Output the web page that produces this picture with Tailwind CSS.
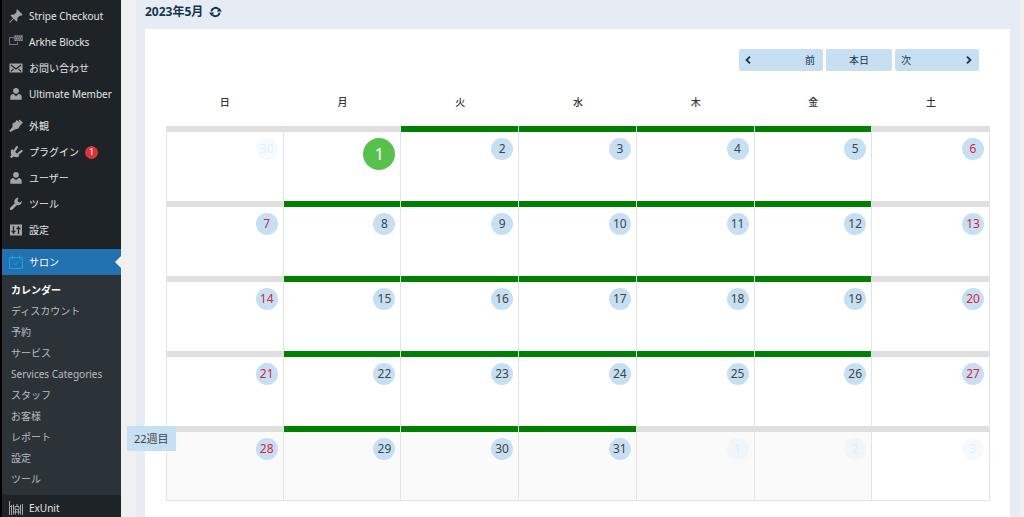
<!DOCTYPE html>
<html lang="ja">

<head>
  <meta charset="UTF-8">
  <meta name="viewport" content="width=device-width, initial-scale=1.0">
  <script src="https://cdn.jsdelivr.net/npm/@tailwindcss/browser@4"></script>
  <title>カレンダー</title>
</head>

<body class="bg-[#f0f0f1] font-['Noto_Sans','Noto_Sans_CJK_JP',sans-serif]">
  <div class="flex h-screen overflow-hidden">

    <nav class="w-[121px] shrink-0 border-l-2 border-black bg-[#1d2327] text-[10px] text-[#e4e5e6] whitespace-nowrap">
      <ul class="pt-[3px]">
        <li>
          <a href="#" class="flex items-center h-[26px] pl-[7px] gap-[6px]">
            <svg class="size-[14px] shrink-0 fill-[#a0a5aa]" viewBox="1 1.5 17.500 17.500"><path d="M10.400 3l1-1.100 6.700 6.700-1.100 1.100c-.8.2-1.600.1-2.200-.2l-3.400 3.400c.5 1.600.3 3.200-.9 4.400L7 13.800 2.600 18.300l-1.200.4.400-1.200L6.200 13 2.700 9.500c1.200-1.200 2.900-1.400 4.400-.9l3.500-3.400c-.4-.7-.4-1.500-.2-2.200z" /></svg>
            Stripe Checkout
          </a>
        </li>
        <li>
          <a href="#" class="flex items-center h-[26px] pl-[7px] gap-[6px]">
            <svg class="size-[14px] shrink-0" viewBox="0 0 14 14"><path d="M5 2.500H.5v7h8V7" fill="none" stroke="#70767b" /><path d="M5 0h9v6H5z" fill="#5f656a" /><path d="M6 1.500h8M5 3.500h8M6 5.500h8" stroke="#8b9095" stroke-dasharray="1 1" /></svg>
            Arkhe Blocks
          </a>
        </li>
        <li>
          <a href="#" class="flex items-center h-[26px] pl-[7px] gap-[6px]">
            <svg class="size-[14px] shrink-0" viewBox="0 0 14 14"><path d="M.5 2.500h13v9H.5z" fill="#a0a5aa" /><path d="M2 4l5 4 5-4M2 10.300l2.500-2.500M12 10.300L9.500 7.800" fill="none" stroke="#1d2327" stroke-width="1.200" /></svg>
            お問い合わせ
          </a>
        </li>
        <li>
          <a href="#" class="flex items-center h-[26px] pl-[7px] gap-[6px]">
            <svg class="size-[14px] shrink-0 fill-[#a0a5aa]" viewBox="0 0 14 14"><circle cx="7" cy="3.800" r="2.900" /><path d="M1.300 12.700V10c0-1.800 1.300-3 3.200-3L7 9.200 9.500 7c1.900 0 3.200 1.200 3.200 3v2.700z" /></svg>
            Ultimate Member
          </a>
        </li>
      </ul>

      <ul class="py-[6px]">
        <li>
          <a href="#" class="flex items-center h-[26px] pl-[7px] gap-[6px]">
            <svg class="size-[14px] shrink-0 fill-[#a0a5aa]" viewBox="0 0 14 14"><path d="M7.500 1l5.500 4-2 1.500L9.500 9.500l-3.700.9L1.500 13 .3 11.700 3.500 8V4.500L6.500 3z" /><path d="M10.500.5l3.300 3-1 1.500-3.300-2.900z" /></svg>
            外観
          </a>
        </li>
        <li>
          <a href="#" class="flex items-center h-[26px] pl-[7px] gap-[6px]">
            <svg class="size-[14px] shrink-0" viewBox="0 0 14 14"><path d="M3 4l7.500 7c-1.800 1.600-4 1.700-5.800.6L2.500 13.200 1 11.800l1.400-2.100C1.300 7.900 1.500 5.600 3 4z" fill="#a0a5aa" /><path d="M5 6.500l3-4.300M8.500 9.500l4-3.500" stroke="#a0a5aa" stroke-width="2.300" stroke-linecap="round" /></svg>
            プラグイン
            <span class="flex items-center justify-center size-[13px] rounded-full bg-[#d63638] text-[9px] text-white">1</span>
          </a>
        </li>
        <li>
          <a href="#" class="flex items-center h-[26px] pl-[7px] gap-[6px]">
            <svg class="size-[14px] shrink-0 fill-[#a0a5aa]" viewBox="0 0 14 14"><circle cx="7" cy="3.800" r="2.900" /><path d="M1.300 12.700V10c0-1.800 1.300-3 3.200-3L7 9.200 9.500 7c1.900 0 3.200 1.200 3.200 3v2.700z" /></svg>
            ユーザー
          </a>
        </li>
        <li>
          <a href="#" class="flex items-center h-[26px] pl-[7px] gap-[6px]">
            <svg class="size-[14px] shrink-0" viewBox="0 0 14 14"><path d="M2.200 11.800L8.300 5.700" stroke="#a0a5aa" stroke-width="2.800" stroke-linecap="round" /><path d="M12.800 3.800a3.800 3.800 0 1 1-3.200-3L8.500 3l.5 2 2 .4z" fill="#a0a5aa" /></svg>
            ツール
          </a>
        </li>
        <li>
          <a href="#" class="flex items-center h-[26px] pl-[7px] gap-[6px]">
            <svg class="size-[14px] shrink-0" viewBox="0 0 14 14"><path d="M1 1.500h12v11H1z" fill="#a0a5aa" /><path d="M4.500 3v8M9.500 3v8M2.500 8.500h4M7.500 5.500h4" stroke="#1d2327" stroke-width="1.300" /></svg>
            設定
          </a>
        </li>
      </ul>

      <a href="#" class="relative flex items-center h-[26px] pl-[7px] gap-[6px] bg-[#2271b1] text-white">
        <svg class="size-[14px] shrink-0 fill-none stroke-[#1fa1ee]" viewBox="0 0 14 14"><path d="M.6 2.500h12.800v10.900H.6zM3.500.3v4M10.500.3v4M4.500 8l2 2 3.200-3.500" /></svg>
        サロン
        <span class="absolute right-0 top-[7px] border-y-[6px] border-r-[6px] border-y-transparent border-r-[#f0f0f1]"></span>
      </a>
      <ul class="py-[5px] bg-[#2c3338] text-[#b9bcbf]">
        <li><a href="#" class="flex items-center h-[21px] pl-[9px] font-bold text-white">カレンダー</a></li>
        <li><a href="#" class="flex items-center h-[21px] pl-[9px]">ディスカウント</a></li>
        <li><a href="#" class="flex items-center h-[21px] pl-[9px]">予約</a></li>
        <li><a href="#" class="flex items-center h-[21px] pl-[9px]">サービス</a></li>
        <li><a href="#" class="flex items-center h-[21px] pl-[9px]">Services Categories</a></li>
        <li><a href="#" class="flex items-center h-[21px] pl-[9px]">スタッフ</a></li>
        <li><a href="#" class="flex items-center h-[21px] pl-[9px]">お客様</a></li>
        <li><a href="#" class="flex items-center h-[21px] pl-[9px]">レポート</a></li>
        <li><a href="#" class="flex items-center h-[21px] pl-[9px]">設定</a></li>
        <li><a href="#" class="flex items-center h-[21px] pl-[9px]">ツール</a></li>
      </ul>
      <a href="#" class="flex items-center h-[26px] pl-[7px] gap-[6px]">
        <svg class="size-[14px] shrink-0 fill-none stroke-[#a0a5aa]" viewBox="0 0 14 14"><path d="M.5 0v14M2.500 4v10M.5 5.500h3M4.500 3.500v10M11.500 3.500v10M13.500 3v11M6 5.500h4v3H6zM6.500 8.500v5M9.500 8.500v5M4.500 11h7M8 3v2" /></svg>
        ExUnit
      </a>
    </nav>

    <main class="flex-1 pl-[15px] pr-1">
      <div class="h-full pl-[9px] pr-[10px] bg-[#e7ecf4]">
        <div class="flex items-center h-[29px] pb-[6px] gap-[6px] text-[#12364d]">
          <h1 class="text-[12px] font-bold">2023年5月</h1>
          <button type="button" aria-label="更新" class="cursor-pointer">
            <svg class="w-[13px] h-[12px]" viewBox="0 0 13 12"><path d="M2.500 5.500a4 4 0 0 1 7-2.300M10.500 6.500a4 4 0 0 1-7 2.300" fill="none" stroke="currentColor" stroke-width="1.900" /><path d="M7.800 5.500H13L10.400 2zM5.200 6.500H0L2.600 10z" fill="currentColor" /></svg>
          </button>
        </div>

        <section class="h-full pl-[21px] pr-5 pt-5 bg-white">
          <div class="flex justify-end gap-[3px] pr-[11px] text-[10px] text-[#12364d]">
            <button type="button" class="flex items-center justify-between w-[84px] h-[22px] px-[6px] rounded-xs bg-[#c7dff2] cursor-pointer">
              <svg class="w-[6px] h-[8px]" viewBox="0 0 6 8"><path d="M5 .7L1.600 4 5 7.300" fill="none" stroke="currentColor" stroke-width="1.800" /></svg>
              <span class="pr-[2px]">前</span>
            </button>
            <button type="button" class="w-[66px] h-[22px] rounded-xs bg-[#c7dff2] cursor-pointer">本日</button>
            <button type="button" class="flex items-center justify-between w-[84px] h-[22px] px-[6px] rounded-xs bg-[#c7dff2] cursor-pointer">
              <span>次</span>
              <svg class="w-[8px] h-[8px]" viewBox="0 0 8 8"><path d="M2 .7L5.400 4 2 7.300" fill="none" stroke="currentColor" stroke-width="1.800" /></svg>
            </button>
          </div>

          <table class="w-full mt-2 table-fixed border-separate border-spacing-0">
            <thead>
              <tr class="h-[47px] text-[10px] text-[#333]">
                <th class="font-medium">日</th>
                <th class="font-medium">月</th>
                <th class="font-medium">火</th>
                <th class="font-medium">水</th>
                <th class="font-medium">木</th>
                <th class="font-medium">金</th>
                <th class="font-medium">土</th>
              </tr>
            </thead>
            <tbody class="calendar"></tbody>
          </table>
        </section>
      </div>
    </main>

    <div class="absolute left-[127px] top-[426px] px-[7px] h-[25px] leading-[25px] bg-[#c7dff2] text-[11px] text-[#444]">22週目</div>
  </div>

  <script>
    const calendar = document.querySelector('.calendar');
    const today = 1;
    const daysInMonth = 31;

    for (let week = 0; week < 5; week++) {
      const row = document.createElement('tr');
      for (let col = 0; col < 7; col++) {
        const day = week * 7 + col;
        const outside = day < 1 || day > daysInMonth;
        const weekend = col === 0 || col === 6;
        const open = !outside && !weekend && day !== today;

        const cell = document.createElement('td');
        cell.className = 'h-[75px] p-0 align-top border-r border-[#e3e3e3]';
        if (col === 0) cell.classList.add('border-l');
        if (week === 4) cell.classList.add('border-b');
        if (week === 4 && col < 6) cell.classList.add('bg-[#fafafa]');

        const bar = document.createElement('div');
        bar.className = open ? 'h-[6px] bg-[#008000]' : 'h-[6px] bg-[#dfdfdf]';

        const label = document.createElement('span');
        if (day === today) {
          label.className = 'flex items-center justify-center ml-auto mr-[5px] mt-[6px] size-[32px] rounded-full bg-[#58c14c] text-[16px] text-white';
        } else {
          label.className = 'flex items-center justify-center ml-auto mr-[5px] mt-[6px] size-[22px] rounded-full text-[12px]';
          if (outside) label.classList.add('bg-[#c7dff2]/15', 'text-[#c7dff2]/40');
          else if (weekend) label.classList.add('bg-[#c7dff2]', 'text-[#d6243c]');
          else label.classList.add('bg-[#c7dff2]', 'text-[#444]');
        }
        label.textContent = day < 1 ? 30 : day > daysInMonth ? day - daysInMonth : day;

        cell.append(bar, label);
        row.appendChild(cell);
      }
      calendar.appendChild(row);
    }
  </script>
</body>

</html>
